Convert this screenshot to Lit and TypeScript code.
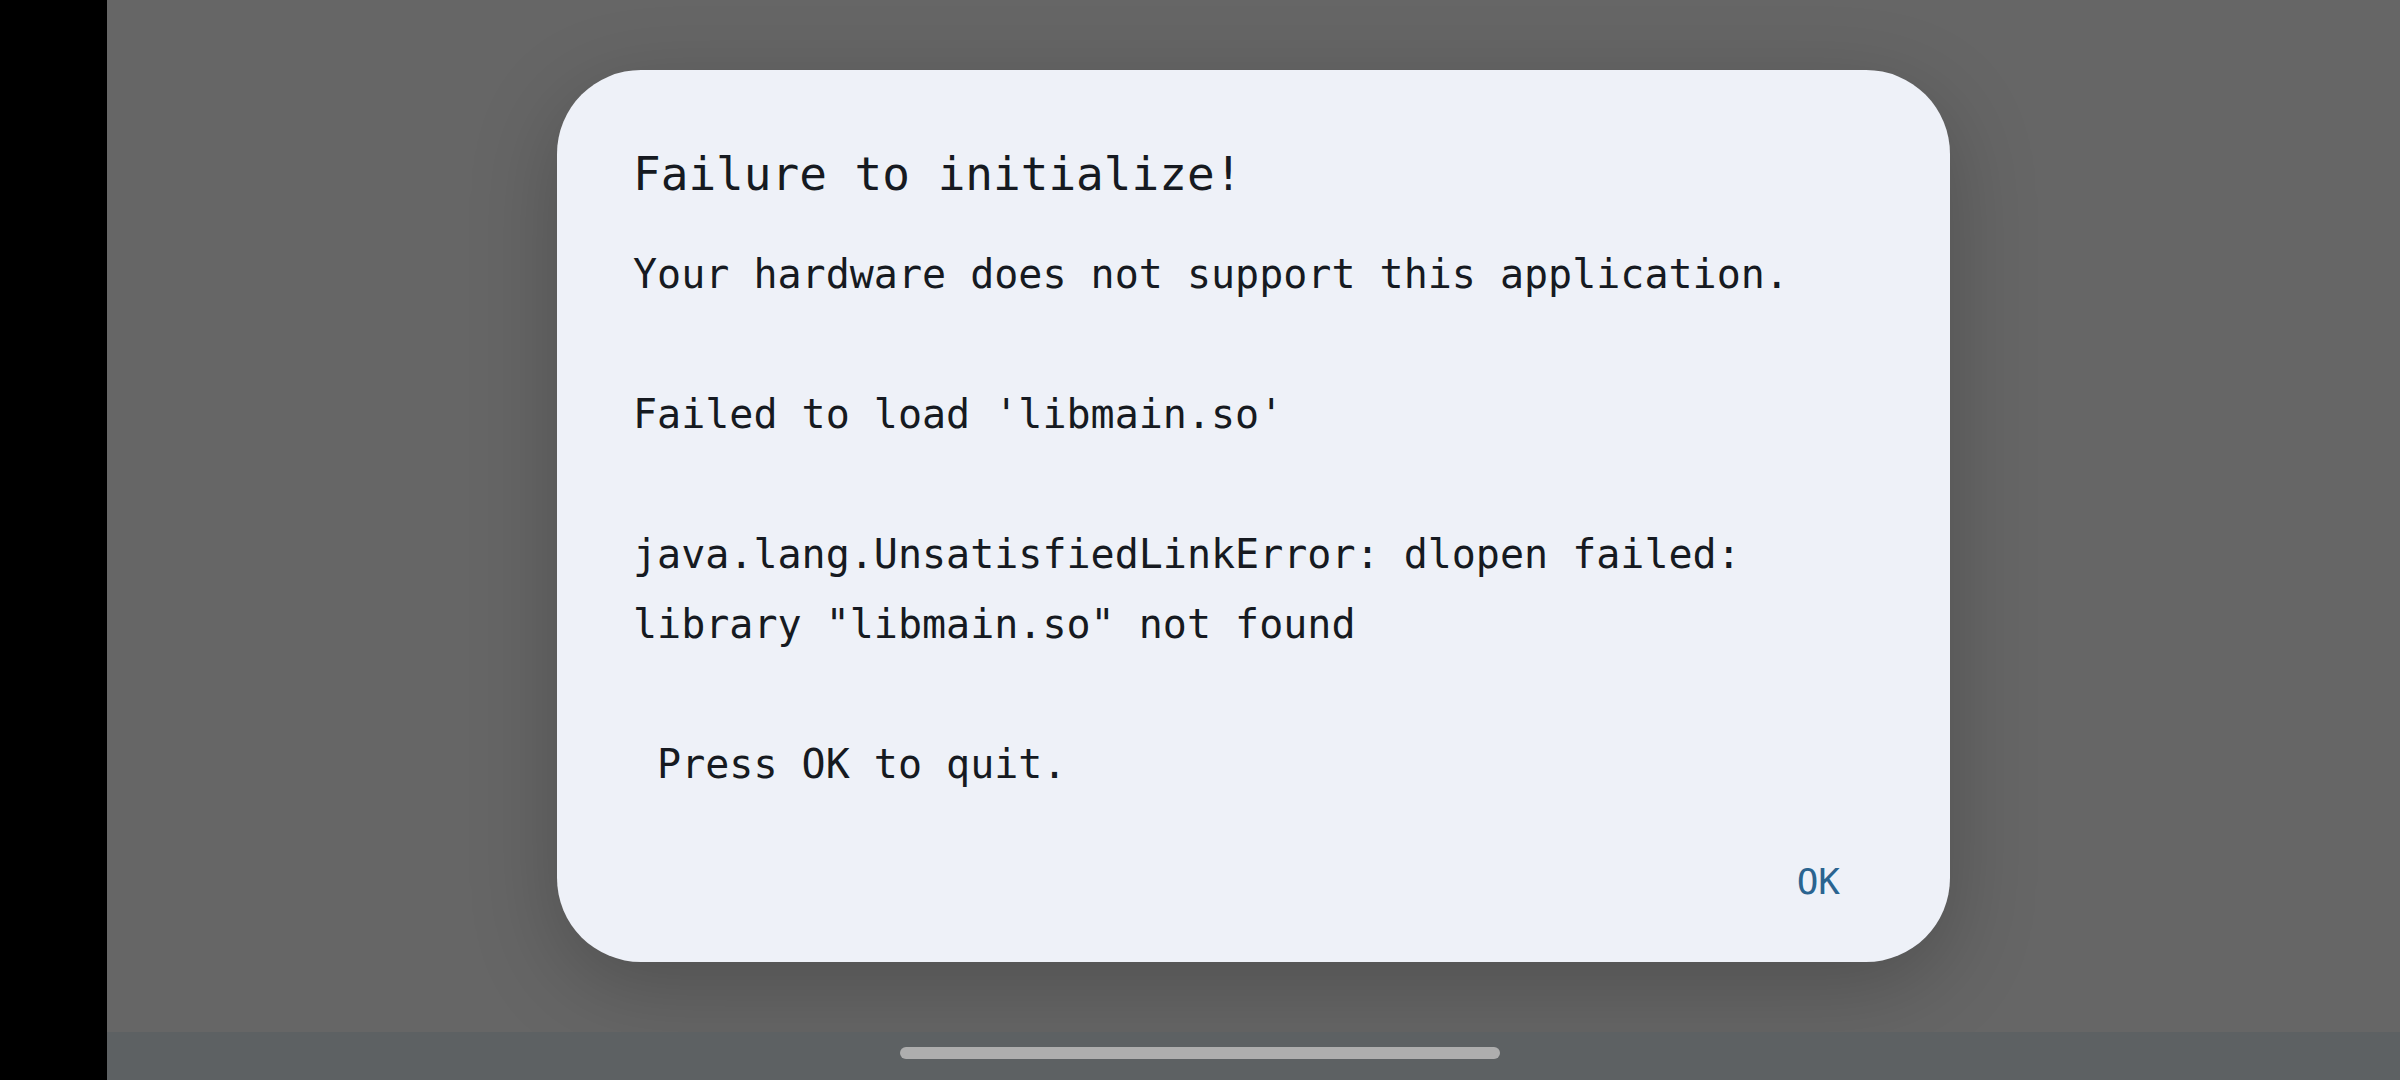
import { LitElement, html, css } from "lit";
import { customElement, property, state } from "lit/decorators.js";

@customElement("alert-dialog")
class AlertDialog extends LitElement {
  @property() heading = "";
  @property() message = "";

  static styles = css`
    :host {
      display: block;
      box-sizing: border-box;
      width: 100%;
      max-width: 1393px;
      padding: 69px 76px 44px;
      border-radius: 84px;
      background: #eef1f8;
      color: #161a21;
      box-shadow: 0 24px 88px rgba(0, 0, 0, 0.22);
      font-family: "DejaVu Sans Mono", "Liberation Mono", monospace;
    }
    .heading {
      margin: 0 0 30px;
      font-size: 46px;
      line-height: 70px;
      font-weight: 400;
    }
    .message {
      margin: 0;
      font-size: 40px;
      line-height: 70px;
      white-space: pre-wrap;
    }
    .actions {
      display: flex;
      justify-content: flex-end;
      margin-top: 47px;
    }
    .confirm {
      border: 0;
      border-radius: 36px;
      padding: 12px 34px;
      background: transparent;
      color: #2a6490;
      font: inherit;
      font-size: 36px;
      line-height: 48px;
      cursor: pointer;
    }
  `;

  private confirm() {
    this.dispatchEvent(new CustomEvent("confirm"));
  }

  render() {
    return html`
      <section role="alertdialog" aria-labelledby="heading" aria-describedby="message">
        <h1 class="heading" id="heading">${this.heading}</h1>
        <p class="message" id="message">${this.message}</p>
        <div class="actions">
          <button class="confirm" type="button" @click=${this.confirm}>OK</button>
        </div>
      </section>
    `;
  }
}

const MESSAGE = [
  "Your hardware does not support this application.",
  "",
  "Failed to load 'libmain.so'",
  "",
  "java.lang.UnsatisfiedLinkError: dlopen failed: library \"libmain.so\" not found",
  "",
  " Press OK to quit.",
].join("\n");

@customElement("app-root")
class AppRoot extends LitElement {
  @state() private open = true;

  static styles = css`
    :host {
      --cutout: 107px;
      display: flex;
      flex-direction: column;
      min-height: 100vh;
      background: linear-gradient(to right, #000 var(--cutout), #666 var(--cutout));
    }
    .stage {
      flex: 1;
      display: flex;
      align-items: center;
      justify-content: center;
      margin-left: var(--cutout);
    }
    .navigation {
      display: flex;
      align-items: center;
      justify-content: center;
      height: 48px;
      padding-bottom: 6px;
      box-sizing: border-box;
      background: linear-gradient(to right, #000 var(--cutout), #5d6163 var(--cutout));
    }
    .handle {
      width: 25%;
      height: 12px;
      border-radius: 6px;
      background: #aeaeae;
    }
  `;

  render() {
    return html`
      <main class="stage">
        ${this.open
          ? html`<alert-dialog
              .heading=${"Failure to initialize!"}
              .message=${MESSAGE}
              @confirm=${() => (this.open = false)}
            ></alert-dialog>`
          : null}
      </main>
      <div class="navigation"><div class="handle"></div></div>
    `;
  }
}
